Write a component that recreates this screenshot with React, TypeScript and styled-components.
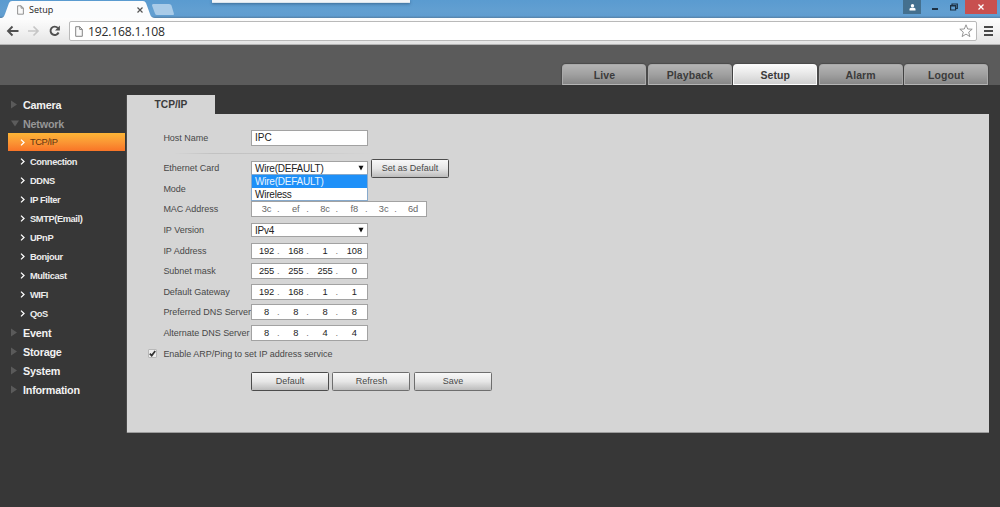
import React from "react";
import styled, { createGlobalStyle, css } from "styled-components";

const GlobalStyle = createGlobalStyle`
  * { box-sizing: border-box; }
  html, body { margin: 0; padding: 0; background: #373737; overflow: hidden; }
  body { font-family: "Liberation Sans", Arial, sans-serif; }
`;

const Page = styled.div`
  width: 1000px;
  height: 507px;
  display: flex;
  flex-direction: column;
  background: #373737;
`;

/* ---------- browser chrome ---------- */

const TitleBar = styled.div`
  position: relative;
  height: 18px;
  display: flex;
  align-items: flex-start;
  justify-content: space-between;
  background: linear-gradient(#5a9bd0, #629fd1 60%, #609dd0 88%, #5580a6);
`;

const TabStrip = styled.div`
  display: flex;
  height: 18px;
`;

const BrowserTab = styled.div`
  position: relative;
  width: 155px;
  height: 18px;
  display: flex;
  align-items: center;
  padding: 1px 12px 0 17px;
  z-index: 1;
`;

const TabShape = styled.svg`
  position: absolute;
  inset: 0;
  z-index: -1;
`;

const TabTitle = styled.span`
  flex: 1;
  margin-left: 5px;
  font: 9px "Open Sans", "Noto Sans", sans-serif;
  color: #222;
`;

const NewTab = styled.svg`
  margin: 4px 0 0 -4px;
`;

const WindowSliver = styled.div`
  position: absolute;
  left: 212px;
  top: 0;
  width: 198px;
  height: 3px;
  background: #f4f6f8;
  border-bottom: 1px solid #dbe4ec;
  box-shadow: 0 1px 3px rgba(30, 60, 90, 0.5);
`;

const WindowButtons = styled.div`
  display: flex;
  padding-right: 3px;
`;

const WindowButton = styled.div<{ $w: number; $bg?: string }>`
  width: ${(p) => p.$w}px;
  height: 14px;
  display: flex;
  align-items: center;
  justify-content: center;
  background: ${(p) => p.$bg ?? "transparent"};
`;

const CloseButton = styled(WindowButton)`
  margin-left: 6px;
`;

const Toolbar = styled.div`
  height: 27px;
  display: flex;
  align-items: center;
  padding: 0 6px;
  background: linear-gradient(#fdfdfd, #f2f2f2 50%, #e4e4e4);
  border-bottom: 1px solid #b4b4b4;
`;

const NavIcons = styled.div`
  width: 63px;
  display: flex;
  align-items: center;
  gap: 8px;
`;

const AddressBar = styled.div`
  width: 908px;
  height: 20px;
  display: flex;
  align-items: center;
  padding: 0 3px 0 5px;
  background: #fff;
  border: 1px solid #b9b9b9;
  border-radius: 2px;
`;

const Url = styled.span`
  flex: 1;
  margin-left: 5px;
  font: 12.2px "Open Sans", "Noto Sans", sans-serif;
  letter-spacing: -0.2px;
  color: #2c2c2c;
`;

const MenuIcon = styled.svg`
  margin-left: 7px;
`;

/* ---------- application header ---------- */

const Header = styled.div`
  height: 40px;
  display: flex;
  align-items: flex-end;
  justify-content: flex-end;
  gap: 1.4px;
  padding-right: 12px;
  background: #5b5b5b;
`;

const MainTab = styled.div<{ $active?: boolean }>`
  width: 84px;
  height: 21px;
  border-radius: 4px 4px 0 0;
  text-align: center;
  font-size: 10.5px;
  font-weight: bold;
  line-height: 20px;
  letter-spacing: 0.1px;
  color: #3b3b3b;
  border: 1px solid ${(p) => (p.$active ? "#fafafa" : "#aaa")};
  border-bottom: 1px solid ${(p) => (p.$active ? "#fff" : "#b5b5b5")};
  background: ${(p) =>
    p.$active
      ? "linear-gradient(#fbfbfb, #e6e6e6 50%, #cfcfcf)"
      : "linear-gradient(#b3b3b3, #a0a0a0 50%, #868686)"};
  box-shadow: 0 0 1px 1px rgba(50, 50, 50, 0.4);
`;

/* ---------- sidebar ---------- */

const Body = styled.div`
  flex: 1;
  display: flex;
  padding-top: 10px;
`;

const Sidebar = styled.nav`
  width: 127px;
  padding-left: 8px;
  border-right: 1px solid #4b4b4b;
  height: 338px;
`;

const MenuGroup = styled.div<{ $open?: boolean }>`
  height: 19px;
  display: flex;
  align-items: center;
  padding-left: 2px;
  gap: 4px;
  font-size: 10.8px;
  letter-spacing: -0.23px;
  font-weight: bold;
  color: ${(p) => (p.$open ? "#969696" : "#f2f2f2")};
`;

const MenuItem = styled.div<{ $active?: boolean }>`
  height: 19px;
  width: 117px;
  display: flex;
  align-items: center;
  padding-left: 12px;
  gap: 5px;
  font-size: 9.3px;
  letter-spacing: -0.4px;
  font-weight: bold;
  color: #ececec;
  ${(p) =>
    p.$active &&
    css`
      height: 18px;
      margin-bottom: 1px;
      font-weight: normal;
      letter-spacing: -0.4px;
      color: #5b3211;
      background: linear-gradient(#fdb536, #fb9734 50%, #f97427);
    `}
`;

/* ---------- settings panel ---------- */

const Content = styled.main`
  width: 862px;
`;

const PanelTab = styled.div`
  width: 88px;
  height: 19px;
  background: #d5d5d5;
  text-align: center;
  font-size: 10.2px;
  font-weight: bold;
  line-height: 20px;
  color: #3b3b3b;
`;

const Panel = styled.div`
  height: 319px;
  padding: 14px 0 0 36.4px;
  background: #d5d5d5;
  border-bottom: 1px solid #9c9c9c;
`;

const Row = styled.div<{ $h?: number }>`
  height: ${(p) => p.$h ?? 20.6}px;
  display: flex;
  align-items: center;
`;

const Label = styled.label`
  width: 87.6px;
  flex: none;
  font-size: 9px;
  letter-spacing: -0.02px;
  white-space: nowrap;
  color: #484848;
`;

const Divider = styled.div`
  width: 200px;
  height: 1px;
  margin: 4px 0 4px 10px;
  background: linear-gradient(90deg, #d5d5d5, #c2c2c2 20%, #c6c6c6 60%, #d5d5d5);
`;

const fieldBox = css`
  width: 117px;
  border: 1px solid #a2a2a2;
  background: #fff;
  color: #222;
`;

const TextField = styled.div`
  ${fieldBox}
  height: 16px;
  padding-left: 3px;
  font-size: 10px;
  line-height: 14px;
`;

const SelectBox = styled.div`
  ${fieldBox}
  position: relative;
  height: 14px;
  display: flex;
  align-items: center;
  justify-content: space-between;
  padding: 0 3px;
  font-size: 10px;
  letter-spacing: -0.22px;
`;

const OptionList = styled.div`
  position: absolute;
  left: -1px;
  top: 12px;
  width: 117px;
  border: 1px solid #86a9cc;
  background: #fff;
  z-index: 2;
`;

const Option = styled.div<{ $selected?: boolean }>`
  height: 12.5px;
  padding-left: 3px;
  line-height: 13px;
  color: ${(p) => (p.$selected ? "#e8f4ff" : "#222")};
  background: ${(p) => (p.$selected ? "#1e90f8" : "#fff")};
`;

const Octets = styled.div<{ $wide?: boolean }>`
  ${fieldBox}
  width: ${(p) => (p.$wide ? 176 : 117)}px;
  height: 16px;
  display: flex;
  align-items: center;
  font-size: 9.3px;
  letter-spacing: -0.1px;
  color: ${(p) => (p.$wide ? "#666" : "#222")};
`;

const Octet = styled.span`
  width: 29.3px;
  display: flex;
  flex: none;
  justify-content: flex-end;
`;

const OctetValue = styled.span`
  width: 22px;
  margin-right: -0.5px;
  text-align: center;
`;

const Dot = styled.span`
  width: 4.3px;
  color: #777;
`;

const Button = styled.button<{ $strong?: boolean }>`
  width: 78px;
  height: 19px;
  padding: 0;
  border: 1px solid ${(p) => (p.$strong ? "#4c4c4c" : "#6e6e6e")};
  border-radius: 1.5px;
  background: linear-gradient(#f8f8f8, #e6e6e6 50%, #bcbcbc);
  font: 9px "Liberation Sans", Arial, sans-serif;
  color: #484848;
`;

const SideAction = styled.div`
  display: flex;
  padding-left: 3px;
`;

const Actions = styled.div`
  display: flex;
  gap: 3.5px;
  padding: 8px 0 0 87.6px;
`;

const CheckRow = styled(Row)`
  margin-left: -15px;
  gap: 6px;
`;

const CheckBox = styled.span`
  width: 9px;
  height: 9px;
  display: flex;
  border: 1px solid #b8b8b8;
  border-radius: 1px;
  background: #eee;
`;

const PageIcon = ({ w, h }: { w: number; h: number }) => (
  <svg width={w} height={h} viewBox="0 0 8 11" fill="#fafafa" stroke="#777" strokeWidth="0.9">
    <path d="M.7.7h4l2.6 2.7v6.9H.7zM4.7.7v2.7h2.6" />
  </svg>
);

const Caret = () => (
  <svg width="6" height="6" viewBox="0 0 6 6">
    <path d="M.5.8h5L3 5.600z" fill="#111" />
  </svg>
);

const GroupArrow = ({ open }: { open?: boolean }) => (
  <svg width="9" height="9" viewBox="0 0 9 9">
    <path d={open ? "M1 1.5h8L5 7.5z" : "M1 .5v8l6-4z"} fill={open ? "#5c5c5c" : "#5a5a5a"} />
  </svg>
);

const Chevron = () => (
  <svg width="5" height="7" viewBox="0 0 5 7" fill="none" stroke="#fff" strokeWidth="1.3">
    <path d="M1 .6l3 2.9-3 2.9" />
  </svg>
);

const octetRows: [string, string[]][] = [
  ["IP Address", ["192", "168", "1", "108"]],
  ["Subnet mask", ["255", "255", "255", "0"]],
  ["Default Gateway", ["192", "168", "1", "1"]],
  ["Preferred DNS Server", ["8", "8", "8", "8"]],
  ["Alternate DNS Server", ["8", "8", "4", "4"]],
];

const networkItems = [
  "TCP/IP", "Connection", "DDNS", "IP Filter", "SMTP(Email)",
  "UPnP", "Bonjour", "Multicast", "WIFI", "QoS",
];

const OctetField = ({ values, wide }: { values: string[]; wide?: boolean }) => (
  <Octets $wide={wide}>
    {values.map((v, i) => (
      <Octet key={i}>
        <OctetValue>{v}</OctetValue>
        <Dot>{i < values.length - 1 ? "." : ""}</Dot>
      </Octet>
    ))}
  </Octets>
);

export default function App() {
  return (
    <Page>
      <GlobalStyle />
      <TitleBar>
        <TabStrip>
          <BrowserTab>
            <TabShape width="155" height="18" viewBox="0 0 155 18">
              <path d="M0 18C4 18 4 16 5 14L9 3Q10 1 12 1H143Q145 1 146 3L150 14Q151 18 155 18Z" fill="#fbfcfd" />
            </TabShape>
            <PageIcon w={7} h={10} />
            <TabTitle>Setup</TabTitle>
            <svg width="6" height="6" viewBox="0 0 6 6" stroke="#555" strokeWidth="1.2">
              <path d="M.5.5l5 5M5.5.5l-5 5" />
            </svg>
          </BrowserTab>
          <NewTab width="24" height="12" viewBox="0 0 24 12">
            <path d="M2 0H18Q20 0 20.5 1.5L23 10Q23 11 22 11H6Q4.5 11 4 9.5L1 1.5Q1 0 2 0Z" fill="#a9cbe8" />
          </NewTab>
        </TabStrip>
        <WindowSliver />
        <WindowButtons>
          <WindowButton $w={18} $bg="#44708f">
            <svg width="7" height="7" viewBox="0 0 7 7" fill="#fff">
              <circle cx="3.5" cy="1.8" r="1.7" />
              <path d="M.5 6.5V5Q.5 4 2 3.8H5Q6.5 4 6.5 5V6.5z" />
            </svg>
          </WindowButton>
          <WindowButton $w={28}>
            <svg width="6" height="8" viewBox="0 0 6 8"><path d="M0 5h6v2H0z" fill="#1d3144" /></svg>
          </WindowButton>
          <WindowButton $w={10}>
            <svg width="8" height="8" viewBox="0 0 8 8" fill="none" stroke="#1d3144">
              <path d="M.6 2.5h5v4.5h-5zM.6 3h5M2 2.5V1h5.3v4.5H5.6" strokeWidth="1.2" />
            </svg>
          </WindowButton>
          <CloseButton $w={32} $bg="#c8504f">
            <svg width="6" height="6" viewBox="0 0 6 6" stroke="#fff" strokeWidth="1.3">
              <path d="M.5.5l5 5M5.5.5l-5 5" />
            </svg>
          </CloseButton>
        </WindowButtons>
      </TitleBar>

      <Toolbar>
        <NavIcons>
          <svg width="13" height="12" viewBox="0 0 13 12" fill="none" stroke="#505050" strokeWidth="1.9">
            <path d="M6.5 1.5L2 6l4.5 4.5M2 6h10.5" />
          </svg>
          <svg width="13" height="12" viewBox="0 0 13 12" fill="none" stroke="#c6c6c6" strokeWidth="1.7">
            <path d="M6.5 1.5L11 6l-4.5 4.5M11 6H1" />
          </svg>
          <svg width="13" height="12" viewBox="0 0 13 12" fill="none" stroke="#505050" strokeWidth="1.9">
            <path d="M9.8 2.9A4.2 4.2 0 1 0 10.600 7.5" />
            <path d="M11.9.5V5.5H7z" fill="#505050" stroke="none" />
          </svg>
        </NavIcons>
        <AddressBar>
          <PageIcon w={8} h={11} />
          <Url>192.168.1.108</Url>
          <svg width="14" height="14" viewBox="0 0 14 14" fill="#fff" stroke="#8a8a8a" strokeWidth="0.9">
            <path d="M7 .8l1.7 4.2 4.5.2-3.5 2.9 1.2 4.5L7 10.100l-3.9 2.5 1.2-4.5L.8 5.2l4.5-.2z" />
          </svg>
        </AddressBar>
        <MenuIcon width="9" height="10" viewBox="0 0 9 10" fill="#484848">
          <path d="M0 0h9v2H0zM0 4h9v2H0zM0 8h9v2H0z" />
        </MenuIcon>
      </Toolbar>

      <Header>
        {["Live", "Playback", "Setup", "Alarm", "Logout"].map((t) => (
          <MainTab key={t} $active={t === "Setup"}>{t}</MainTab>
        ))}
      </Header>

      <Body>
        <Sidebar>
          <MenuGroup><GroupArrow />Camera</MenuGroup>
          <MenuGroup $open><GroupArrow open />Network</MenuGroup>
          {networkItems.map((t) => (
            <MenuItem key={t} $active={t === "TCP/IP"}><Chevron />{t}</MenuItem>
          ))}
          {["Event", "Storage", "System", "Information"].map((t) => (
            <MenuGroup key={t}><GroupArrow />{t}</MenuGroup>
          ))}
        </Sidebar>

        <Content>
          <PanelTab>TCP/IP</PanelTab>
          <Panel>
            <Row>
              <Label>Host Name</Label>
              <TextField>IPC</TextField>
            </Row>
            <Divider />
            <Row $h={21}>
              <Label>Ethernet Card</Label>
              <SelectBox>
                Wire(DEFAULT)<Caret />
                <OptionList>
                  <Option $selected>Wire(DEFAULT)</Option>
                  <Option>Wireless</Option>
                </OptionList>
              </SelectBox>
              <SideAction>
                <Button $strong>Set as Default</Button>
              </SideAction>
            </Row>
            <Row><Label>Mode</Label></Row>
            <Row>
              <Label>MAC Address</Label>
              <OctetField wide values={["3c", "ef", "8c", "f8", "3c", "6d"]} />
            </Row>
            <Row>
              <Label>IP Version</Label>
              <SelectBox>IPv4<Caret /></SelectBox>
            </Row>
            {octetRows.map(([label, values]) => (
              <Row key={label}>
                <Label>{label}</Label>
                <OctetField values={values} />
              </Row>
            ))}
            <CheckRow>
              <CheckBox>
                <svg width="7" height="7" viewBox="0 0 7 7" fill="none" stroke="#333" strokeWidth="1.7">
                  <path d="M.8 3.6l1.9 2L6.2 1" />
                </svg>
              </CheckBox>
              <Label>Enable ARP/Ping to set IP address service</Label>
            </CheckRow>
            <Actions>
              <Button $strong>Default</Button>
              <Button>Refresh</Button>
              <Button>Save</Button>
            </Actions>
          </Panel>
        </Content>
      </Body>
    </Page>
  );
}
